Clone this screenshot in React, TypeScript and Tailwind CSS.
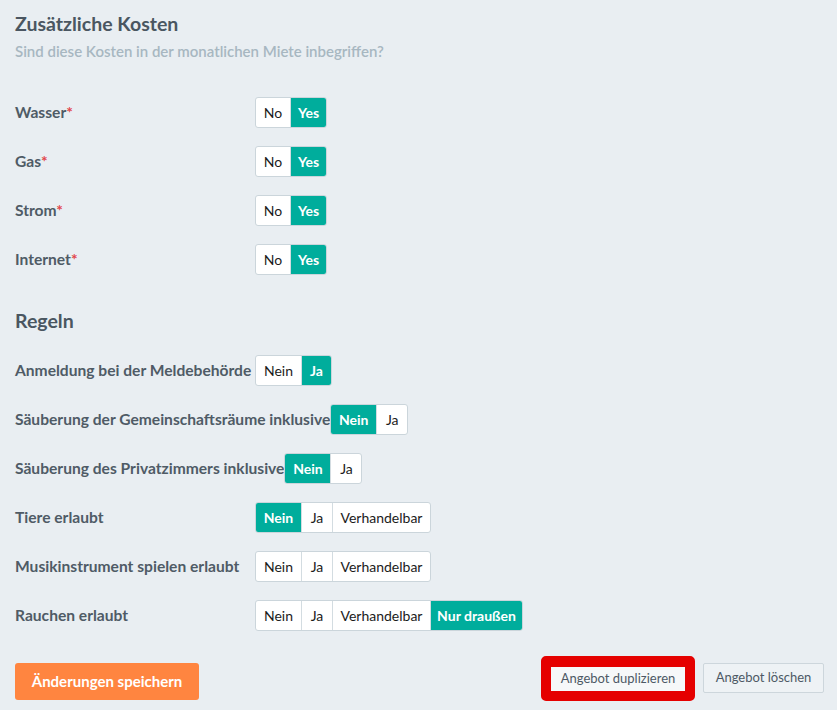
import React from "react";

type Opt = { label: string; active?: boolean; w: number };

function Seg({ opts }: { opts: Opt[] }) {
  return (
    <div className="flex h-[31px] shrink-0 overflow-hidden rounded-[3px] border border-[#cbd5db] bg-white">
      {opts.map((o, i) => (
        <div
          key={i}
          style={{ width: o.w }}
          className={
            "flex items-center justify-center text-[14px] " +
            (i > 0 ? "border-l border-[#d3dce1] " : "") +
            (o.active ? "bg-[#00ad9c] font-bold text-white" : "text-[#1b1b1b]")
          }
        >
          {o.label}
        </div>
      ))}
    </div>
  );
}

function Row({ label, req, opts }: { label: string; req?: boolean; opts: Opt[] }) {
  return (
    <div className="flex h-[31px] items-center">
      <div className="min-w-[240px] whitespace-nowrap text-[15.6px] font-bold text-[#4f5b66]">
        {label}
        {req && <span className="text-[#e2474b]">*</span>}
      </div>
      <Seg opts={opts} />
    </div>
  );
}

export default function App() {
  const yn: Opt[] = [
    { label: "No", w: 34 },
    { label: "Yes", active: true, w: 36 },
  ];
  return (
    <div className="min-h-screen bg-[#e9eef2] px-[15px] pt-3 font-['Lato',sans-serif]">
      <h2 className="text-[19.5px] font-bold leading-[24px] text-[#4a5661]">Zusätzliche Kosten</h2>
      <p className="mt-[5px] text-[15px] font-semibold leading-[20px] text-[#a7b7c1]">
        Sind diese Kosten in der monatlichen Miete inbegriffen?
      </p>
      <div className="mt-[36px] flex flex-col gap-[18px]">
        <Row label="Wasser" req opts={yn} />
        <Row label="Gas" req opts={yn} />
        <Row label="Strom" req opts={yn} />
        <Row label="Internet" req opts={yn} />
      </div>
      <h2 className="mt-[34px] text-[19.5px] font-bold leading-[24px] text-[#4a5661]">Regeln</h2>
      <div className="mt-[22px] flex flex-col gap-[18px]">
        <Row
          label="Anmeldung bei der Meldebehörde"
          opts={[
            { label: "Nein", w: 45 },
            { label: "Ja", active: true, w: 30 },
          ]}
        />
        <Row
          label="Säuberung der Gemeinschaftsräume inklusive"
          opts={[
            { label: "Nein", active: true, w: 45 },
            { label: "Ja", w: 31 },
          ]}
        />
        <Row
          label="Säuberung des Privatzimmers inklusive"
          opts={[
            { label: "Nein", active: true, w: 45 },
            { label: "Ja", w: 31 },
          ]}
        />
        <Row
          label="Tiere erlaubt"
          opts={[
            { label: "Nein", active: true, w: 45 },
            { label: "Ja", w: 31 },
            { label: "Verhandelbar", w: 98 },
          ]}
        />
        <Row
          label="Musikinstrument spielen erlaubt"
          opts={[
            { label: "Nein", w: 45 },
            { label: "Ja", w: 31 },
            { label: "Verhandelbar", w: 98 },
          ]}
        />
        <Row
          label="Rauchen erlaubt"
          opts={[
            { label: "Nein", w: 45 },
            { label: "Ja", w: 31 },
            { label: "Verhandelbar", w: 98 },
            { label: "Nur draußen", active: true, w: 92 },
          ]}
        />
      </div>
      <div className="mt-[25px] flex items-start">
        <button className="mt-[7px] flex h-[37px] w-[184px] items-center justify-center rounded-[3px] bg-[#ff8540] text-[15px] font-bold text-white">
          Änderungen speichern
        </button>
        <div className="ml-auto mr-[-2px] flex items-start gap-[8px]">
          <div className="flex h-[45px] w-[154px] rounded-[5px] border-[10px] border-t-[11px] border-[#e50000] bg-[#f6f8f9]">
            <div className="flex flex-1 items-center justify-center text-[13px] text-[#4d5965]">
              Angebot duplizieren
            </div>
          </div>
          <button className="mt-[7px] flex h-[30px] w-[121px] items-center justify-center rounded-[2px] border border-[#cdd6dc] bg-[#eef2f5] text-[13px] text-[#4d5965]">
            Angebot löschen
          </button>
        </div>
      </div>
    </div>
  );
}
